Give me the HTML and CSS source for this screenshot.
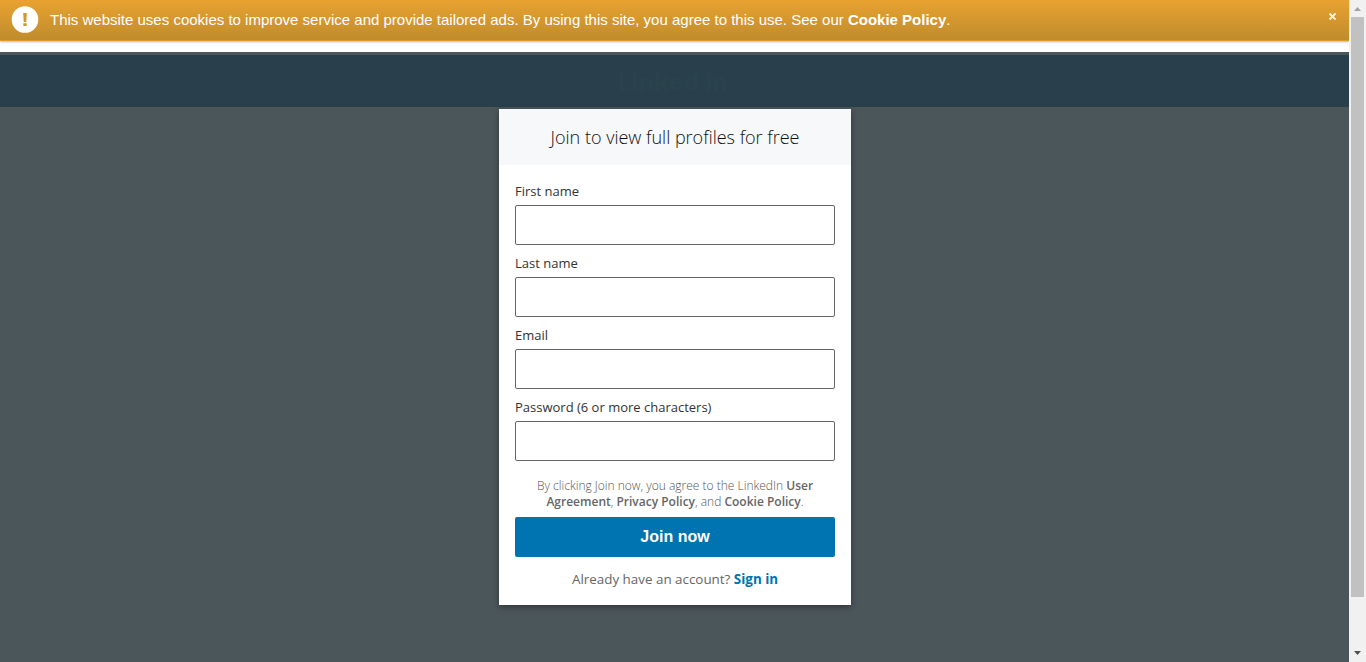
FILE: index.html
```html
<!DOCTYPE html>
<html lang="en">
<head>
<meta charset="utf-8">
<title>Join LinkedIn</title>
<link rel="stylesheet" href="styles.css">
</head>
<body>
<div class="window">
  <div class="page">
    <div class="alert">
      <svg class="alert-icon" width="28" height="28" viewBox="0 0 28 28"><circle cx="14" cy="13.500" r="13.300" fill="#fff"/><path d="M12.200 7h3.600l-.5 9h-2.600zM12.300 17.200h3.400v2.800h-3.400z" fill="#d4972f"/></svg>
      <p class="alert-text">This website uses cookies to improve service and provide tailored ads. By using this site, you agree to this use. See our <b>Cookie Policy</b>.</p>
      <svg class="alert-close" width="8" height="8" viewBox="0 0 8 8"><path d="M1.500 1.500l6 6M7.500 1.500l-6 6" stroke="#fff5df" stroke-width="1.800"/></svg>
    </div>
    <div class="overlay">
      <div class="brand"><span class="brand-name">Linked in</span></div>
      <form class="card">
        <h1 class="card-title">Join to view full profiles for free</h1>
        <div class="card-body">
          <label class="field"><span class="label">First name</span><input class="input" type="text"></label>
          <label class="field"><span class="label">Last name</span><input class="input" type="text"></label>
          <label class="field"><span class="label">Email</span><input class="input" type="text"></label>
          <label class="field"><span class="label">Password (6 or more characters)</span><input class="input" type="password"></label>
          <p class="legal">By clicking Join now, you agree to the LinkedIn <b>User</b><br><b>Agreement</b>, <b>Privacy Policy</b>, and <b>Cookie Policy</b>.</p>
          <button class="join" type="button">Join now</button>
          <p class="signin">Already have an account? <b>Sign in</b></p>
        </div>
      </form>
    </div>
  </div>
  <div class="scrollbar">
    <svg class="arrow" width="17" height="17" viewBox="0 0 17 17"><path d="M5 11h7L8.500 7z" fill="#a3a3a3"/></svg>
    <div class="thumb"></div>
    <svg class="arrow" width="17" height="17" viewBox="0 0 17 17"><path d="M5 6h7l-3.500 4z" fill="#505050"/></svg>
  </div>
</div>
</body>
</html>
```
FILE: styles.css
```css
* { box-sizing: border-box; }
body { margin: 0; overflow: hidden; font-family: "Open Sans", "Noto Sans", sans-serif; }
.window { display: flex; width: 1366px; height: 662px; }
.page { width: 1349px; height: 662px; background: #fff; }
.alert {
  display: flex; height: 41px; padding: 0 13px 0 11px;
  font-family: "Liberation Sans", Arial, sans-serif; color: #fff;
  background: linear-gradient(#e9a230, #bf8c2d);
  border-bottom: 1px solid #e09a2c; box-shadow: 0 1px 2px rgba(0,0,0,.3);
}
.alert-icon { margin-top: 6px; }
.alert-text { margin: 0 0 0 11px; flex: 1; font-size: 15px; line-height: 40px; white-space: nowrap; }
.alert-close { margin-top: 12px; }
.overlay { height: 610px; margin-top: 11px; padding-top: 3px; background: #4b565b; }
.brand { display: flex; justify-content: center; height: 52px; background: #293f4b; }
.brand-name { margin: 8px 4px 0 0; font: 800 27px/36px "Lato", sans-serif; letter-spacing: .1px; color: #2a424c; white-space: nowrap; }
.card {
  width: 352px; height: 496px; margin: 2px 0 0 499px; background: #fff;
  box-shadow: 0 2px 6px rgba(0,0,0,.4);
}
.card-title {
  height: 56px; margin: 0; background: #f6f8fa; text-align: center;
  font-size: 18px; font-weight: 300; line-height: 57px; color: #111; white-space: nowrap;
}
.card-body { padding: 16px; }
.field { display: block; height: 72px; }
.label { display: block; height: 24px; font-size: 13px; line-height: 20px; color: #333; white-space: nowrap; }
.input { display: block; width: 320px; height: 40px; padding: 0 10px; border: 1px solid #666; border-radius: 2px; background: #fff; }
.legal { height: 32px; margin: 9px 0 0; text-align: center; font-size: 12px; line-height: 16px; font-weight: 300; color: #555; white-space: nowrap; }
.legal b { font-weight: 600; color: #666; }
.join {
  display: block; width: 320px; height: 40px; margin-top: 7px; padding: 0; border: 0; border-radius: 2px;
  background: #0073b1; color: #fff; font: 700 16px "Liberation Sans", Arial, sans-serif;
}
.signin { margin: 12px 0 0; text-align: center; font-size: 13.4px; line-height: 21px; color: #666; white-space: nowrap; }
.signin b { color: #0073b1; font-weight: 700; }
.scrollbar { width: 17px; height: 662px; background: #f1f1f1; }
.arrow { display: block; }
.thumb { width: 13px; height: 580px; margin: 0 2px 48px; background: #c1c1c1; }
```
